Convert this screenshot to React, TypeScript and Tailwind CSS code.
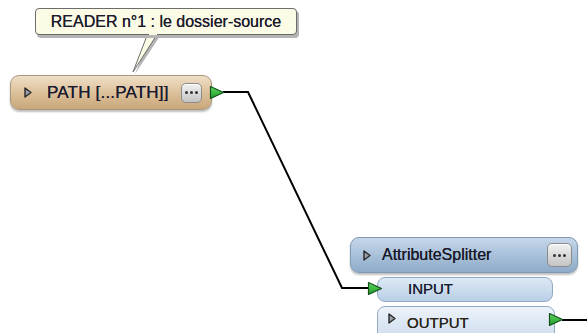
import React from "react"

const Expander = ({ className = "" }: { className?: string }) => (
    <svg width="8" height="11" viewBox="0 0 8 11" className={`shrink-0 ${className}`}>
        <path d="M1 1 L7 5.5 L1 10 Z" fill="#9aa0a8" stroke="#2a2a2a" strokeWidth="1.4" strokeLinejoin="round" />
    </svg>
)

const MoreButton = ({ size }: { size: string }) => (
    <div
        className={`ml-auto flex shrink-0 items-center justify-center gap-[2px] rounded-[5px] border border-[#8c8c8c] bg-gradient-to-b from-[#f2f2f2] to-[#c4c4c4] shadow-[inset_0_1px_0_#ffffff] ${size}`}
    >
        <span className="h-[3px] w-[3px] rounded-full bg-[#333]" />
        <span className="h-[3px] w-[3px] rounded-full bg-[#333]" />
        <span className="h-[3px] w-[3px] rounded-full bg-[#333]" />
    </div>
)

// green connection port, sits over the node edge
const Port = ({ className }: { className: string }) => (
    <svg className={`absolute ${className}`} width="16" height="15" viewBox="0 0 16 15">
        <defs>
            <linearGradient id="portg" x1="0" y1="0" x2="0" y2="1">
                <stop offset="0" stopColor="#5fd85f" />
                <stop offset="1" stopColor="#1e9a2a" />
            </linearGradient>
        </defs>
        <path d="M1.5 1.5 L14.5 7.5 L1.5 13.5 Z" fill="url(#portg)" stroke="#14501a" strokeWidth="1.2" strokeLinejoin="round" />
    </svg>
)

export default function App() {
    return (
        <div className="relative h-[333px] w-[587px] overflow-hidden bg-white font-['Liberation_Sans',Arial,sans-serif]">
            {/* connections + tooltip tail */}
            <svg className="absolute left-0 top-0" width="587" height="333">
                <polyline points="223,92 248,92 342,288 368,288" fill="none" stroke="#000" strokeWidth="2" strokeLinejoin="miter" />
                <line x1="562" y1="320" x2="587" y2="320" stroke="#000" strokeWidth="2" />
                <polygon points="150,36 135,74 160,36" fill="#b4b4b4" />
                <polygon points="148,33 133,72 158,33" fill="#fbfbe6" stroke="#6c6c6c" strokeWidth="1" />
            </svg>

            {/* tooltip */}
            <div className="absolute left-[35px] top-[8px] flex h-[27px] w-[262px] items-center justify-center rounded-[4px] border border-[#6c6c6c] bg-[#fbfbe6] text-[16px] leading-none text-[#1c1c2c] shadow-[2px_3px_0_#b4b4b4] [text-shadow:0_0_0.4px_#1c1c2c]">
                READER n°1 : le dossier-source
            </div>
            <svg className="absolute left-0 top-0" width="587" height="333">
                <line x1="149" y1="34" x2="157" y2="34" stroke="#fbfbe6" strokeWidth="2" />
            </svg>

            {/* reader node */}
            <div className="absolute left-[10px] top-[75px] w-[202px]">
                <div className="flex h-[35px] items-center rounded-[9px] border border-[#a8987f] bg-gradient-to-b from-[#efdfc6] via-[#dcc19b] to-[#c9a67a] pl-[13px] pr-[9px] text-[17px] text-[#1a1a30] shadow-[0_2px_2px_rgba(0,0,0,0.25)] [text-shadow:0_0_0.4px_#1a1a30]">
                    <Expander className="mr-[15px]" />
                    <span className="shrink-0 whitespace-nowrap tracking-[0.2px]">PATH [...PATH]]</span>
                    <MoreButton size="h-[20px] w-[21px]" />
                </div>
                <Port className="-right-[13px] top-[10px]" />
            </div>

            {/* transformer */}
            <div className="absolute left-[350px] top-[237px] flex w-[228px] flex-col gap-[4px]">
                <div className="flex h-[36px] items-center rounded-[9px] border border-[#7f98b3] bg-gradient-to-b from-[#c6d7e9] via-[#a9c1da] to-[#8eabc8] pl-[12px] pr-[5px] text-[16px] text-[#1a1a28] shadow-[0_2px_2px_rgba(0,0,0,0.25)] [text-shadow:0_0_0.4px_#1a1a28]">
                    <Expander className="mr-[11px]" />
                    <span className="whitespace-nowrap">AttributeSplitter</span>
                    <MoreButton size="h-[24px] w-[25px]" />
                </div>
                <div className="relative ml-[27px] w-[176px]">
                    <div className="flex h-[25px] items-center rounded-[8px] border border-[#93aac4] bg-gradient-to-b from-[#dde9f5] to-[#b9cfe6] pl-[30px] text-[15px] text-[#1c2233] [text-shadow:0_0_0.4px_#1c2233]">
                        INPUT
                    </div>
                    <Port className="-left-[10px] top-[4px]" />
                </div>
                <div className="relative ml-[27px] w-[178px]">
                    <div className="flex h-[34px] items-start rounded-[8px] border border-[#93aac4] bg-gradient-to-b from-[#edf3fa] to-[#cddcee] pl-[10px] pt-[6px] text-[15px] text-[#2a2418] [text-shadow:0_0_0.4px_#2a2418]">
                        <Expander className="mr-[11px]" />
                        <span className="-mt-[1px] whitespace-nowrap">OUTPUT</span>
                    </div>
                    <Port className="left-[171px] top-[6px]" />
                </div>
            </div>
        </div>
    )
}
